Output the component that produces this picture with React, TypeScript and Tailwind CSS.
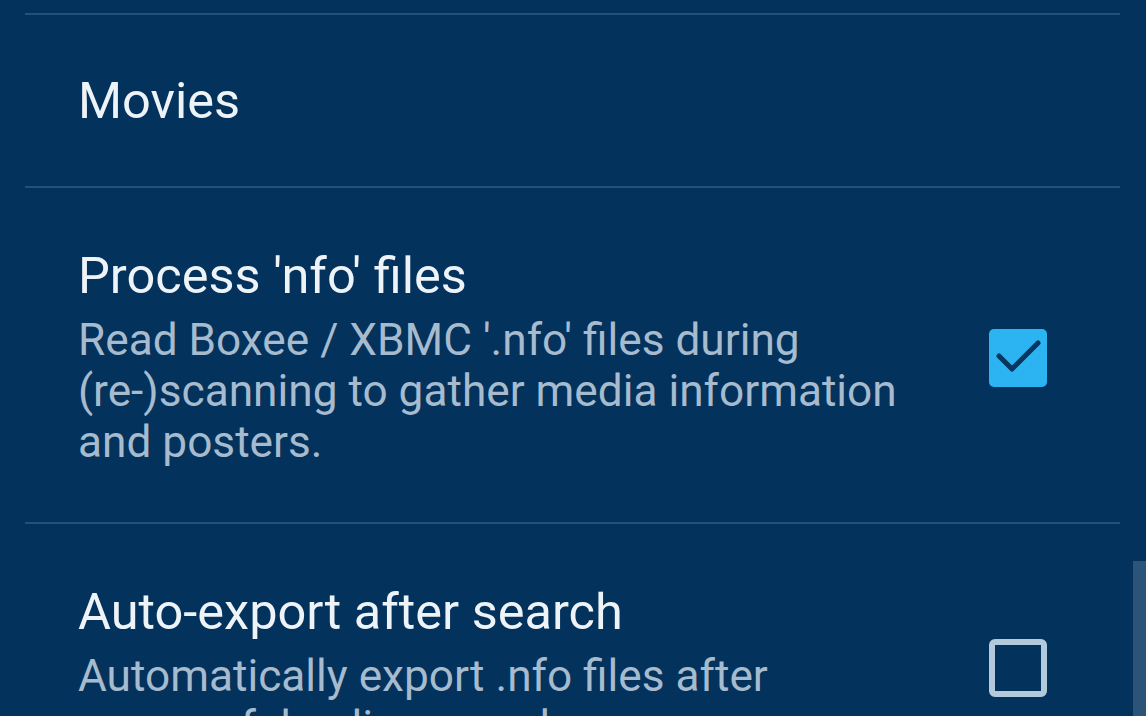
import React from 'react';

const Divider = () => <div className="mx-[25px] mr-[26px] h-[2px] bg-[#24507a]" />;

function Checkbox({ checked }: { checked: boolean }) {
  if (checked) {
    return (
      <div className="h-[58px] w-[58px] rounded-[5px] bg-[#2cb4f2]">
        <svg width="58" height="58" viewBox="0 0 58 58" fill="none">
          <path d="M10 27l13 13 26-26" stroke="#083661" strokeWidth="5" strokeLinecap="round" strokeLinejoin="round" />
        </svg>
      </div>
    );
  }
  return <div className="h-[58px] w-[58px] rounded-[6px] border-[6px] border-[#b3cadd]" />;
}

function PrefRow({ title, summary, checked }: { title: string; summary: string; checked: boolean }) {
  return (
    <div className="flex items-center pl-[78px] pr-[99px] pt-[59px] pb-[54px]">
      <div className="w-[870px]">
        <div className="text-[50.5px] leading-[58px] text-[#eef3f8]">{title}</div>
        <div className="mt-[10px] text-[44.2px] leading-[51px] text-[#a7bbce]">{summary}</div>
      </div>
      <div className="ml-auto">
        <Checkbox checked={checked} />
      </div>
    </div>
  );
}

export default function App() {
  return (
    <div className="relative h-[716px] w-[1146px] overflow-hidden bg-[#03325c] font-['Roboto',sans-serif]">
      <div className="h-[13px]" />
      <Divider />

      {/* category header */}
      <div className="flex h-[171px] items-center pl-[78px]">
        <span className="text-[50.5px] leading-[58px] text-[#eef3f8]">Movies</span>
      </div>
      <Divider />

      <PrefRow
        title="Process 'nfo' files"
        summary="Read Boxee / XBMC '.nfo' files during (re-)scanning to gather media information and posters."
        checked={true}
      />
      <Divider />

      <PrefRow
        title="Auto-export after search"
        summary="Automatically export .nfo files after successful online search"
        checked={false}
      />

      {/* scrollbar */}
      <div className="absolute right-0 top-[561px] h-[200px] w-[13px] bg-[#2c5479]" />
    </div>
  );
}
